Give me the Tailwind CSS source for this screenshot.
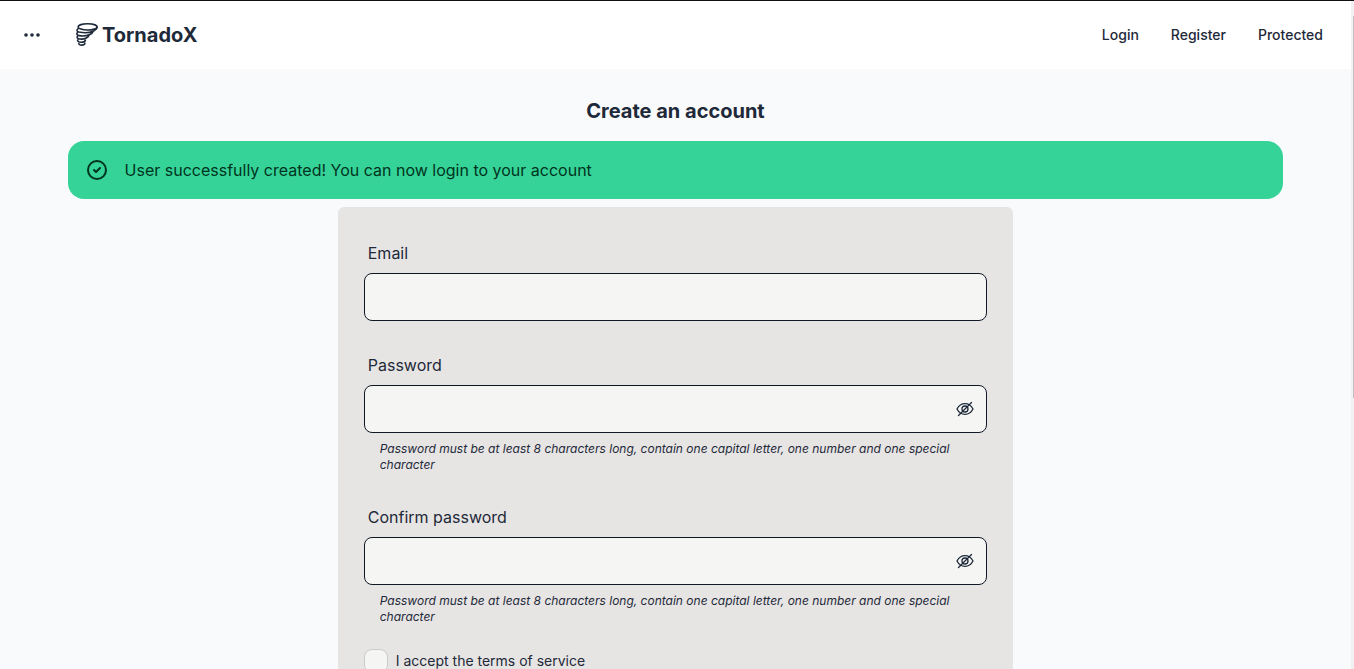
<!DOCTYPE html>
<html lang="en">
<head>
<meta charset="utf-8">
<meta name="viewport" content="width=device-width, initial-scale=1">
<title>TornadoX</title>
<script src="https://cdn.jsdelivr.net/npm/@tailwindcss/browser@4"></script>
</head>
<body class="flex h-screen overflow-hidden border-t border-[#111114] bg-[#f9fafb] font-['Inter',sans-serif] text-base text-gray-800">
<div class="min-w-0 flex-1">
  <header class="flex h-17 items-center justify-between bg-white pr-7">
    <div class="flex items-center">
      <button type="button" aria-label="Open menu" class="ml-5 flex size-6 items-center justify-center">
        <svg class="size-5" viewBox="0 0 20 20" fill="currentColor"><circle cx="4" cy="10" r="1.8"/><circle cx="10" cy="10" r="1.8"/><circle cx="16" cy="10" r="1.8"/></svg>
      </button>
      <a href="#" class="ml-8 flex items-center gap-0.5 text-xl font-bold">
        <svg class="h-6 w-6" viewBox="0 0 24 24" fill="none" stroke="currentColor" stroke-width="1.6" stroke-linecap="round" stroke-linejoin="round">
          <ellipse cx="11.600" cy="3.900" rx="9.500" ry="3.100"/>
          <path d="M21.100 4C20.800 6 19.300 7.300 17.300 8.200M2.100 5.600C.4 7 .6 8.400 3 9 7.500 10 13.500 9.700 17.300 8.200M17.300 8.200C16.800 9.600 15.500 10.700 13.900 11.500M1.500 9.400C.2 11 1 12.200 3.200 12.600 7 13.300 11 12.800 13.900 11.500M13 12.200C12.500 13.600 11.500 14.500 10.300 15M1.500 13.300C.6 14.700 1.600 15.700 3.600 16 6 16.300 8.500 16 10.300 15M1.800 16.900C1.200 18.200 2.400 19.100 4.500 19.200 7 19.300 9 18.600 9.400 17.200M2.800 20.500C2.900 21.600 4.200 22.100 5.800 22.100 7.500 22.100 8.700 21.500 8.900 20.400"/>
        </svg>
        <span>TornadoX</span>
      </a>
    </div>
    <nav class="flex items-center gap-8 text-sm font-medium">
      <a href="#">Login</a>
      <a href="#">Register</a>
      <a href="#">Protected</a>
    </nav>
  </header>
  <main class="flex flex-col items-center pt-7">
    <h1 class="text-xl font-bold">Create an account</h1>
    <div role="status" class="mt-4 flex w-9/10 items-center gap-4 rounded-2xl bg-[#36d399] p-4 text-[#003320]">
      <svg class="ml-px size-6" viewBox="0 0 24 24" fill="none" stroke="currentColor" stroke-width="2" stroke-linecap="round" stroke-linejoin="round"><path d="M9 12l2 2 4-4m6 2a9 9 0 11-18 0 9 9 0 0118 0z"/></svg>
      <span class="py-px">User successfully created! You can now login to your account</span>
    </div>
    <form class="mt-2 flex w-1/2 flex-col gap-6 rounded-md bg-[#e7e5e4] p-[26px]">
      <div>
        <label for="email" class="block px-1 py-2">Email</label>
        <input id="email" type="email" class="block h-12 w-full rounded-lg border border-gray-900 bg-stone-100 px-4">
      </div>
      <div>
        <label for="password" class="block px-1 py-2">Password</label>
        <div class="flex h-12 items-center rounded-lg border border-gray-900 bg-stone-100 pr-3">
          <input id="password" type="password" class="h-full min-w-0 flex-1 px-4">
          <button type="button" aria-label="Show password">
            <svg class="size-[18px]" viewBox="0 0 18 18" fill="none" stroke="currentColor" stroke-width="1.3" stroke-linecap="round"><path d="M1 9C2.800 5.500 5.500 3.700 9 3.700S15.200 5.500 17 9C15.200 12.500 12.500 14.300 9 14.300S2.800 12.500 1 9Z"/><circle cx="9" cy="9" r="3"/><path d="M2.500 15.500 15.500 2.500"/></svg>
          </button>
        </div>
        <p class="mt-2 px-4 text-xs italic">Password must be at least 8 characters long, contain one capital letter, one number and one special character</p>
      </div>
      <div>
        <label for="confirm" class="block px-1 py-2">Confirm password</label>
        <div class="flex h-12 items-center rounded-lg border border-gray-900 bg-stone-100 pr-3">
          <input id="confirm" type="password" class="h-full min-w-0 flex-1 px-4">
          <button type="button" aria-label="Show confirmed password">
            <svg class="size-[18px]" viewBox="0 0 18 18" fill="none" stroke="currentColor" stroke-width="1.3" stroke-linecap="round"><path d="M1 9C2.800 5.500 5.500 3.700 9 3.700S15.200 5.500 17 9C15.200 12.500 12.500 14.300 9 14.300S2.800 12.500 1 9Z"/><circle cx="9" cy="9" r="3"/><path d="M2.500 15.500 15.500 2.500"/></svg>
          </button>
        </div>
        <p class="mt-2 px-4 text-xs italic">Password must be at least 8 characters long, contain one capital letter, one number and one special character</p>
      </div>
      <div class="flex items-center gap-2">
        <input id="terms" type="checkbox" class="size-6 appearance-none rounded-lg border border-[#c9cbcd] bg-stone-100 checked:bg-gray-800">
        <label for="terms" class="text-sm">I accept the terms of service</label>
      </div>
    </form>
  </main>
</div>
<div aria-hidden="true" class="w-[3px] shrink-0 bg-[#f1f1f1] pt-[15px]">
  <div class="ml-auto h-[382px] w-px bg-[#c1c1c1]"></div>
</div>
</body>
</html>
